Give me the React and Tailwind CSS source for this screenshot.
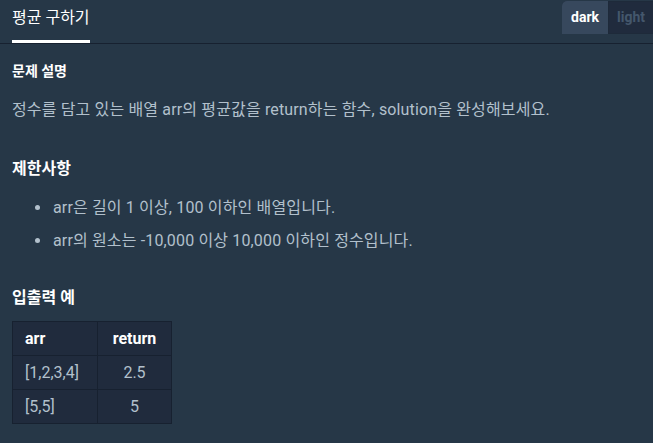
export default function App() {
  return (
    <main
      className="w-[653px] h-[443px] overflow-hidden bg-[#263747] text-[#b2c0cc]"
      style={{ fontFamily: 'Roboto, "Noto Sans CJK KR", sans-serif' }}
    >
      <header className="flex items-start justify-between h-[44px] border-b border-[#172130]">
        <div className="ml-3 h-full flex flex-col">
          <h1 className="pt-[6px] text-[16px] leading-[24px] text-white">평균 구하기</h1>
          <div className="mt-auto h-[3px] bg-white" />
        </div>
        <div className="mt-[1px] flex h-[33px] rounded-tl-[5px] bg-[#202b3d] overflow-hidden">
          <button className="px-[9px] text-[14px] font-bold text-white bg-[#37485d]">dark</button>
          <button className="px-[8px] text-[14px] font-bold text-[#44576c] border border-r-0 border-[#1e2a3a]">
            light
          </button>
        </div>
      </header>

      <section className="px-3">
        <h6 className="mt-[17px] text-[14px] leading-[20px] font-bold text-white">문제 설명</h6>
        <p className="mt-[17px] text-[16px] leading-[24px] tracking-[0.15px]">
          정수를 담고 있는 배열 arr의 평균값을 return하는 함수, solution을 완성해보세요.
        </p>

        <h5 className="mt-[35px] text-[16px] leading-[24px] font-bold text-white">제한사항</h5>
        <ul className="mt-[15px] pl-[40px] list-disc marker:text-[#b2c0cc] tracking-[0.15px]">
          <li className="pl-[1px] text-[16px] leading-[24px]">arr은 길이 1 이상, 100 이하인 배열입니다.</li>
          <li className="mt-[9px] pl-[1px] text-[16px] leading-[24px]">
            arr의 원소는 -10,000 이상 10,000 이하인 정수입니다.
          </li>
        </ul>

        <h5 className="mt-[33px] text-[16px] leading-[24px] font-bold text-white">입출력 예</h5>
        <table className="mt-[11px] border-collapse bg-[#202b3d] text-[16px]">
          <thead>
            <tr className="h-[34px]">
              <th className="w-[85px] px-[12px] text-left font-bold text-white border border-[#172130]">arr</th>
              <th className="w-[74px] px-[12px] text-center font-bold text-white border border-[#172130]">return</th>
            </tr>
          </thead>
          <tbody>
            <tr className="h-[34px]">
              <td className="px-[12px] text-left border border-[#172130]">[1,2,3,4]</td>
              <td className="px-[12px] text-center border border-[#172130]">2.5</td>
            </tr>
            <tr className="h-[34px]">
              <td className="px-[12px] text-left border border-[#172130]">[5,5]</td>
              <td className="px-[12px] text-center border border-[#172130]">5</td>
            </tr>
          </tbody>
        </table>
      </section>
    </main>
  );
}
